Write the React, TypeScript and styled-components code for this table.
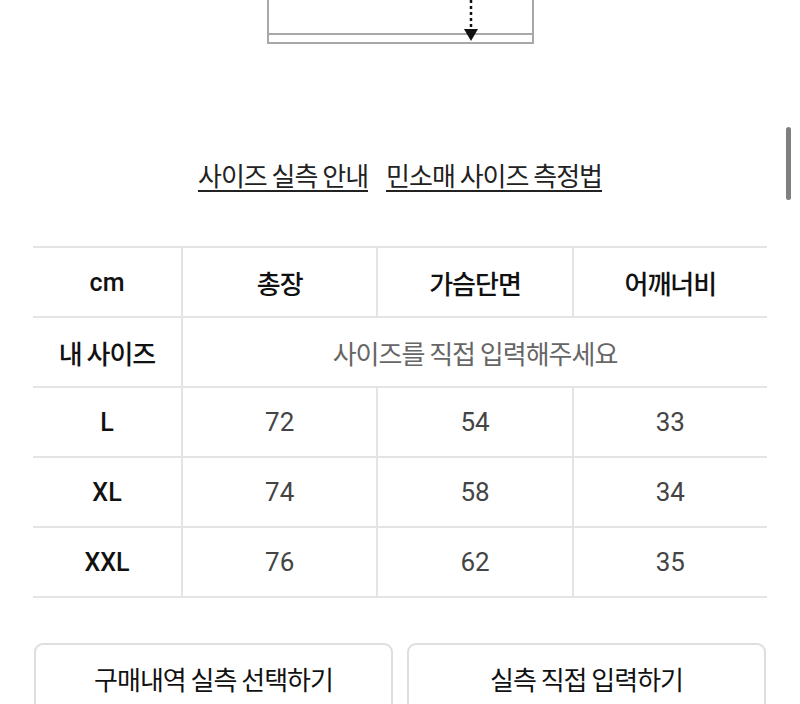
import React from "react";
import styled, { createGlobalStyle } from "styled-components";

const GlobalStyle = createGlobalStyle`
  html, body {
    margin: 0;
    padding: 0;
    background: #ffffff;
    overflow: hidden;
  }
  body {
    font-family: Roboto, "Noto Sans CJK KR", sans-serif;
    color: #111111;
  }
`;

const Page = styled.div`
  position: relative;
  width: 800px;
  height: 704px;
  overflow: hidden;
`;

const Figure = styled.div`
  display: flex;
  justify-content: center;
  height: 46px;
`;

const LinkRow = styled.div`
  display: flex;
  justify-content: center;
  gap: 18px;
  margin-top: 114px;
`;

const GuideLink = styled.a`
  font-family: "Noto Sans CJK KR", sans-serif;
  font-size: 26px;
  letter-spacing: -1px;
  line-height: 30px;
  color: #222222;
  text-decoration: none;
  border-bottom: 2px solid #222222;
  cursor: pointer;
`;

const Table = styled.div`
  margin: 54px 33px 0;
  border-top: 2px solid #e4e4e4;
`;

const Row = styled.div`
  display: grid;
  grid-template-columns: 148px repeat(3, 1fr);
  border-bottom: 2px solid #e4e4e4;
`;

const Cell = styled.div<{ $first?: boolean; $span?: number; $tone?: "head" | "label" | "value" | "hint" }>`
  height: 68px;
  display: flex;
  align-items: center;
  justify-content: center;
  border-left: ${(p) => (p.$first ? "none" : "2px solid #e4e4e4")};
  grid-column: ${(p) => (p.$span ? `span ${p.$span}` : "auto")};
  font-family: ${(p) =>
    p.$tone === "hint" || p.$tone === "head"
      ? `"Noto Sans CJK KR", sans-serif`
      : `Roboto, "Noto Sans CJK KR", sans-serif`};
  font-size: ${(p) =>
    p.$tone === "value" ? "26px" : p.$tone === "label" ? "25px" : "26px"};
  letter-spacing: ${(p) => (p.$tone === "hint" || p.$tone === "head" ? "-1px" : "0")};
  font-weight: ${(p) => (p.$tone === "head" || p.$tone === "label" ? 500 : 400)};
  color: ${(p) =>
    p.$tone === "value" ? "#444444" : p.$tone === "hint" ? "#666666" : "#111111"};
`;

const KoLabel = styled.span`
  font-family: "Noto Sans CJK KR", sans-serif;
  font-size: 26px;
  letter-spacing: -1px;
  font-weight: 500;
`;

const ButtonRow = styled.div`
  display: grid;
  grid-template-columns: 1fr 1fr;
  gap: 14px;
  padding: 0 34px;
  margin-top: 45px;
`;

const ActionButton = styled.button`
  height: 72px;
  border: 2px solid #dedede;
  border-radius: 9px;
  background: #ffffff;
  font-family: "Noto Sans CJK KR", sans-serif;
  font-size: 26px;
  letter-spacing: -1px;
  font-weight: 400;
  color: #111111;
  display: flex;
  align-items: center;
  justify-content: center;
  padding: 0 0 2px;
  cursor: pointer;
`;

const ScrollThumb = styled.div`
  position: absolute;
  right: 9px;
  top: 127px;
  width: 5px;
  height: 73px;
  border-radius: 3px;
  background: #7f7f7f;
`;

const rows = [
  { size: "L", values: ["72", "54", "33"] },
  { size: "XL", values: ["74", "58", "34"] },
  { size: "XXL", values: ["76", "62", "35"] },
];

export default function App() {
  return (
    <Page>
      <GlobalStyle />
      <Figure>
        <svg width="270" height="46" viewBox="0 0 270 46">
          <path d="M3 0 V43 H268 V0" fill="none" stroke="#a8a8a8" strokeWidth="2" />
          <line x1="3" y1="34" x2="268" y2="34" stroke="#a8a8a8" strokeWidth="2" />
          <line x1="206" y1="0" x2="206" y2="28" stroke="#111" strokeWidth="2.5" strokeDasharray="3 3" />
          <polygon points="199,29 213,29 206,41" fill="#111" />
        </svg>
      </Figure>
      <LinkRow>
        <GuideLink>사이즈 실측 안내</GuideLink>
        <GuideLink>민소매 사이즈 측정법</GuideLink>
      </LinkRow>
      <Table>
        <Row>
          <Cell $first $tone="label">cm</Cell>
          <Cell $tone="head">총장</Cell>
          <Cell $tone="head">가슴단면</Cell>
          <Cell $tone="head">어깨너비</Cell>
        </Row>
        <Row>
          <Cell $first $tone="label">
            <KoLabel>내 사이즈</KoLabel>
          </Cell>
          <Cell $span={3} $tone="hint">사이즈를 직접 입력해주세요</Cell>
        </Row>
        {rows.map((r) => (
          <Row key={r.size}>
            <Cell $first $tone="label">{r.size}</Cell>
            {r.values.map((v, i) => (
              <Cell key={i} $tone="value">{v}</Cell>
            ))}
          </Row>
        ))}
      </Table>
      <ButtonRow>
        <ActionButton>구매내역 실측 선택하기</ActionButton>
        <ActionButton>실측 직접 입력하기</ActionButton>
      </ButtonRow>
      <ScrollThumb />
    </Page>
  );
}
